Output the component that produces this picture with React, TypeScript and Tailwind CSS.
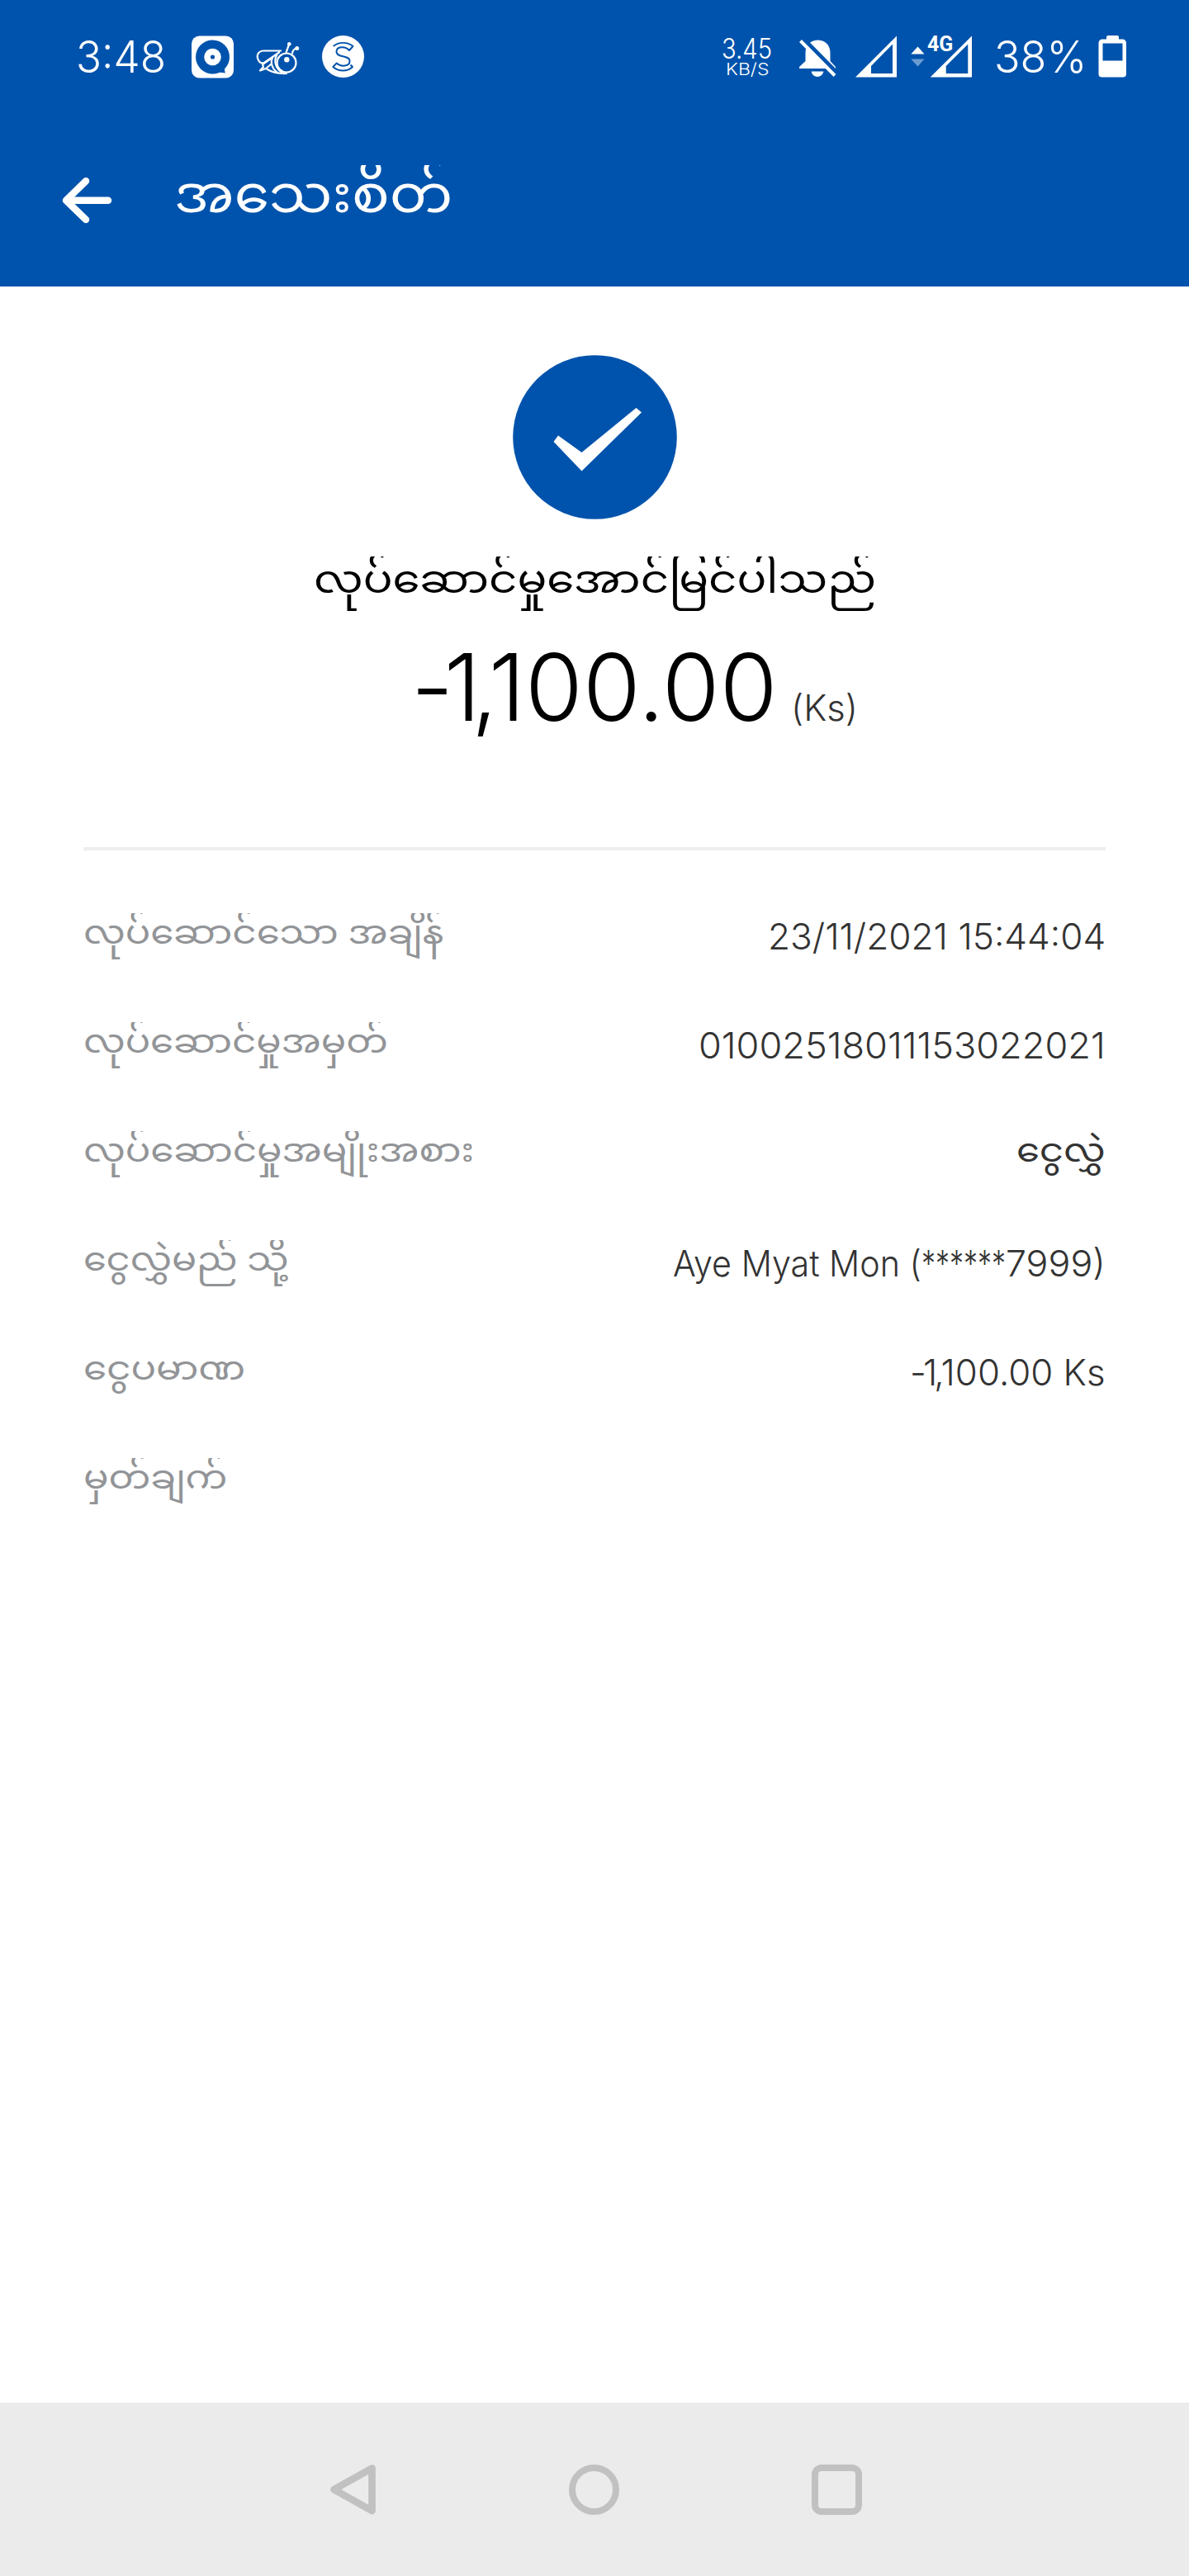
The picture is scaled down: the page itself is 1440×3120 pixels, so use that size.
import React, { ReactNode, useLayoutEffect, useRef, useState } from "react";

const LATIN = "font-['Inter',sans-serif] font-light";
const BURMESE = "overflow-hidden font-['Noto_Sans_Myanmar',sans-serif]";

/* Text squeezed or stretched horizontally so that it fills its box. */
function FitText({ className, children }: { className: string; children: ReactNode }) {
  const ref = useRef<HTMLSpanElement>(null);
  const [scale, setScale] = useState(1);
  useLayoutEffect(() => {
    const el = ref.current;
    if (el && el.parentElement && el.offsetWidth) {
      setScale(el.parentElement.clientWidth / el.offsetWidth);
    }
  }, []);
  return (
    <span className={`block shrink-0 whitespace-nowrap ${className}`}>
      <span ref={ref} className="inline-block origin-left" style={{ transform: `scaleX(${scale})` }}>
        {children}
      </span>
    </span>
  );
}

function StatusBar() {
  return (
    <div className="flex h-[137px] items-center pl-[92px] text-white">
      <FitText className={`${LATIN} w-[109px] text-[54px] leading-[138px]`}>3:48</FitText>
      <svg className="ml-[31px] size-[52px] shrink-0" viewBox="0 0 52 52">
        <rect x="0" y="0.5" width="51" height="51" rx="9.500" fill="#fff" />
        <circle cx="25.500" cy="26" r="20.500" fill="#0053ac" />
        <path d="M39 36L40.700 45.500L30 44Z" fill="#0053ac" />
        <circle cx="25.500" cy="26" r="10.300" fill="#fff" />
        <circle cx="25.500" cy="26" r="2.600" fill="#0053ac" />
      </svg>
      <svg className="ml-[26px] h-[52px] w-[54px] shrink-0" viewBox="0 0 54 52" fill="none" stroke="#fff" strokeWidth="2.200" strokeLinecap="round" strokeLinejoin="round">
        <path d="M30 18.500H9C2 19 0 25 3.300 30.500C5 33.500 7 34 10 33L28 20.500" />
        <path d="M18 28L8 35L9 38L5 42.500L12 40L18 35M12 40C20 45 28 46.500 37 46" />
        <circle cx="37" cy="33" r="11.500" />
        <path d="M20 27C17 33 20 41 26 45M25.500 23C21 31 24 40 31 44.500M36.700 20L40 11M44 21.500C44.500 18 46 16 49.500 15.500" />
        <circle cx="40.300" cy="10.200" r="2.300" fill="#fff" stroke="none" />
        <circle cx="49.700" cy="15.500" r="2.500" fill="#fff" stroke="none" />
        <circle cx="37.300" cy="29.200" r="3.200" fill="#fff" stroke="none" />
      </svg>
      <svg className="ml-[26px] size-[51px] shrink-0" viewBox="0 0 51 51" fill="none" stroke="#0053ac" strokeWidth="1.900" strokeLinejoin="round">
        <circle cx="25.500" cy="25.500" r="25.500" fill="#fff" stroke="none" />
        <path d="M13.700 13C20 7.500 31 7.500 37.500 13L33 18C28 12.500 17.500 13 17.500 19.500C17.500 27.500 33.500 23 33.500 31C33.500 37.500 23 38.500 17.700 33.500L13.300 38C20 44 31 44 37 38L34.500 35.500" />
      </svg>
      <div className="ml-[433px] flex w-[61px] shrink-0 flex-col items-end">
        <FitText className={`${LATIN} w-[61px] text-[34px] leading-[30px]`}>3.45</FitText>
        <FitText className={`${LATIN} mr-[3px] w-[53px] text-[20px] leading-[20px]`}>KB/S</FitText>
      </div>
      <svg className="ml-[32px] h-[52px] w-[46px] shrink-0" viewBox="0 0 46 52">
        <path d="M8.500 21C8.500 12 14 6 23.500 5.500C33 6 38.500 12 38.500 21V31L45 38V40H1V38L8.500 31Z" fill="#fff" />
        <path d="M15.700 43.500H30.300C29 52 17 52 15.700 43.500Z" fill="#fff" />
        <path d="M4.500 2.500L49 47.500" stroke="#0053ac" strokeWidth="5" />
        <path d="M2.500 6.500L44 48.500" stroke="#fff" strokeWidth="4" />
      </svg>
      <svg className="ml-[22px] h-[52px] w-[52px] shrink-0" viewBox="0 0 52 52">
        <path fillRule="evenodd" d="M51 0.500V50.500H1ZM46 10.500L20 37V46H46Z" fill="#fff" />
      </svg>
      <div className="relative ml-[15px] h-[52px] w-[76px] shrink-0">
        <svg className="h-[52px] w-[76px]" viewBox="0 0 76 52">
          <path fillRule="evenodd" d="M75 0.500V50.500H24.700ZM70.300 10.500L43.700 37V46H70.300Z" fill="#fff" />
          <path d="M1.300 22.500L9.500 13.500L17.500 22.500Z" fill="#fff" />
          <path d="M1.300 28.500H17.500L9.500 37.500Z" fill="#6b9bd0" />
        </svg>
        <span className="absolute left-[21px] top-0 font-['Roboto',sans-serif] text-[25px] font-bold leading-[22px]">4G</span>
      </div>
      <FitText className={`${LATIN} ml-[26px] w-[112px] text-[54px] leading-[138px]`}>38%</FitText>
      <svg className="ml-[14px] h-[52px] w-[34px] shrink-0" viewBox="0 0 34 52">
        <path fillRule="evenodd" d="M10 2A2 2 0 0 1 12 0H23A2 2 0 0 1 25 2V4.500H29.500A4.500 4.500 0 0 1 34 9V46.500A4 4 0 0 1 30 50.500H4.500A4 4 0 0 1 0.500 46.500V9A4.500 4.500 0 0 1 5 4.500H10ZM5.500 9.500V30.500H29.500V9.500Z" fill="#fff" />
      </svg>
    </div>
  );
}

type Row = { label: string; labelWidth: string; value: ReactNode };

const VALUE = `${LATIN} text-[44px] leading-[68px] text-[#333]`;

const rows: Row[] = [
  {
    label: "လုပ်ဆောင်သော အချိန်",
    labelWidth: "w-[436px]",
    value: <FitText className={`${VALUE} w-[409px]`}>23/11/2021 15:44:04</FitText>,
  },
  {
    label: "လုပ်ဆောင်မှုအမှတ်",
    labelWidth: "w-[369px]",
    value: <FitText className={`${VALUE} w-[493px]`}>01002518011153022021</FitText>,
  },
  {
    label: "လုပ်ဆောင်မှုအမျိုးအစား",
    labelWidth: "w-[473px]",
    value: <FitText className={`${BURMESE} mt-[6px] h-[66px] w-[108px] text-[40px] leading-[56px] text-[#333]`}>ငွေလွှဲ</FitText>,
  },
  {
    label: "ငွေလွှဲမည် သို့",
    labelWidth: "w-[249px]",
    value: (
      <span className="flex">
        <FitText className={`${VALUE} w-[301px]`}>Aye Myat Mon (</FitText>
        <FitText className={`${VALUE} w-[102px]`}>******</FitText>
        <FitText className={`${VALUE} w-[121px]`}>7999)</FitText>
      </span>
    ),
  },
  {
    label: "ငွေပမာဏ",
    labelWidth: "w-[196px]",
    value: (
      <FitText className={`${VALUE} w-[237px]`}>
        <span className="tracking-[-0.09em]">-1,</span>100.00 Ks
      </FitText>
    ),
  },
  { label: "မှတ်ချက်", labelWidth: "w-[174px]", value: null },
];

export default function App() {
  return (
    <div className="flex h-[3120px] w-[1440px] flex-col bg-white">
      <header className="h-[347px] bg-[#0053ac]">
        <StatusBar />
        <div className="flex">
          <svg className="ml-[74px] mt-[76px] h-[60px] w-[64px]" viewBox="0 0 64 60" fill="none" stroke="#fff" strokeWidth="8.500" strokeLinecap="round" strokeLinejoin="round">
            <path d="M30 6.300L6 29.700L30 53M8 29.700H57" />
          </svg>
          <FitText className={`${BURMESE} ml-[73px] mt-[63px] h-[86px] w-[337px] text-[63px] leading-[86px] text-white`}>
            အသေးစိတ်
          </FitText>
        </div>
      </header>

      <main className="flex flex-1 flex-col">
        <svg className="ml-[621px] mt-[83px] size-[199px]" viewBox="0 0 199 199">
          <circle cx="99.500" cy="99.500" r="99.300" fill="#0053ac" />
          <path d="M49.500 105L55 97.500L83.500 118L149.500 64L156 69.500L83.500 140.500Z" fill="#fff" />
        </svg>
        <FitText className={`${BURMESE} ml-[380px] mt-[45px] h-[66px] w-[681px] text-[48px] leading-[66px] text-black`}>
          လုပ်ဆောင်မှုအောင်မြင်ပါသည်
        </FitText>
        <div className="ml-[498px] mt-[22px] flex h-[140px] items-baseline text-black">
          <FitText className={`${LATIN} w-[443px] text-[113px] leading-[140px]`}>
            <span className="tracking-[-0.1em]">-1,</span>100.00
          </FitText>
          <FitText className={`${LATIN} ml-[17px] w-[81px] text-[44px] leading-[60px] text-[#333]`}>(Ks)</FitText>
        </div>
        <hr className="ml-[101px] mt-[124px] h-[4px] w-[1238px] border-0 bg-[#eee]" />
        <div className="mt-[70px]">
          {rows.map((r) => (
            <div key={r.label} className="flex h-[132px] justify-between px-[101px]">
              <FitText className={`${BURMESE} mt-[6px] h-[56px] ${r.labelWidth} text-[40px] leading-[56px] text-[#929497]`}>
                {r.label}
              </FitText>
              {r.value}
            </div>
          ))}
        </div>
      </main>

      <nav className="flex h-[210px] items-center bg-[#ebebeb]">
        <svg className="ml-[399px] h-[62px] w-[57px]" viewBox="0 0 57 62" fill="none" stroke="#c1c1c1" strokeWidth="8.700" strokeLinejoin="round">
          <path d="M51.500 5.500V57L5.500 31.200Z" />
        </svg>
        <span className="ml-[233px] size-[61px] rounded-full border-[8.500px] border-[#c1c1c1]" />
        <span className="ml-[233px] size-[61px] rounded-[12px] border-[8.500px] border-[#c1c1c1]" />
      </nav>
    </div>
  );
}
